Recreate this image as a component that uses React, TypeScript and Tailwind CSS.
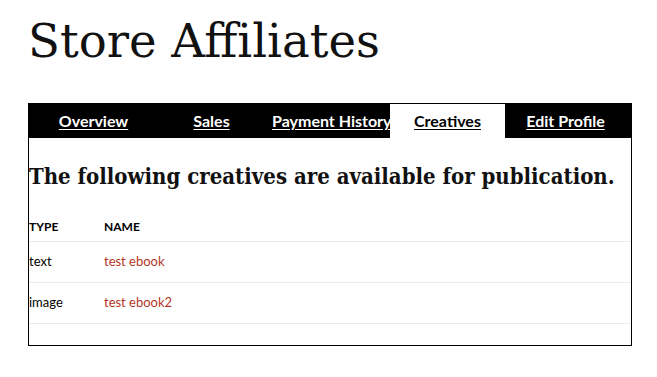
import React from "react";

const tabs = ["Overview", "Sales", "Payment History", "Creatives", "Edit Profile"];
const rows = [
  { type: "text", name: "test ebook" },
  { type: "image", name: "test ebook2" },
];

export default function App() {
  const serif = { fontFamily: '"DejaVu Serif", serif' };
  const serifCond = { fontFamily: '"DejaVu Serif Condensed", "DejaVu Serif", serif', fontStretch: "condensed" as const };
  return (
    <div className="min-h-[377px] bg-white px-[28px] pt-[13px] text-black" style={{ fontFamily: 'Lato, "Liberation Sans", sans-serif' }}>
      <h1 className="text-[46.6px] leading-[56px] text-[#111]" style={serif}>Store Affiliates</h1>
      <div className="mt-[34px] w-[604px] border border-black">
        <div className="flex h-[34px] gap-[3px] bg-black pl-[7px]">
          {tabs.map((t) => (
            <div
              key={t}
              className={`w-[115px] shrink-0 whitespace-nowrap text-center text-[16px] font-bold leading-[34px] ${
                t === "Creatives" ? "bg-white text-black" : "text-white"
              }`}
            >
              <a className="underline underline-offset-2">{t}</a>
            </div>
          ))}
        </div>
        <h2 className="mt-[24px] whitespace-nowrap text-[22px] font-bold leading-[28px] text-[#111]" style={serifCond}>
          The following creatives are available for publication.
        </h2>
        <table className="mt-[28px] mb-[21px] w-full border-collapse text-[13px]">
          <thead>
            <tr className="border-b border-[#ebebeb]">
              <th className="w-[75px] pb-[5px] text-left text-[12px] font-bold uppercase leading-[18px]">Type</th>
              <th className="pb-[5px] text-left text-[12px] font-bold uppercase leading-[18px]">Name</th>
            </tr>
          </thead>
          <tbody>
            {rows.map((r) => (
              <tr key={r.type} className="h-[41px] border-b border-[#ebebeb]">
                <td className="align-middle">{r.type}</td>
                <td className="align-middle">
                  <a className="text-[#b5371f]">{r.name}</a>
                </td>
              </tr>
            ))}
          </tbody>
        </table>
      </div>
    </div>
  );
}
